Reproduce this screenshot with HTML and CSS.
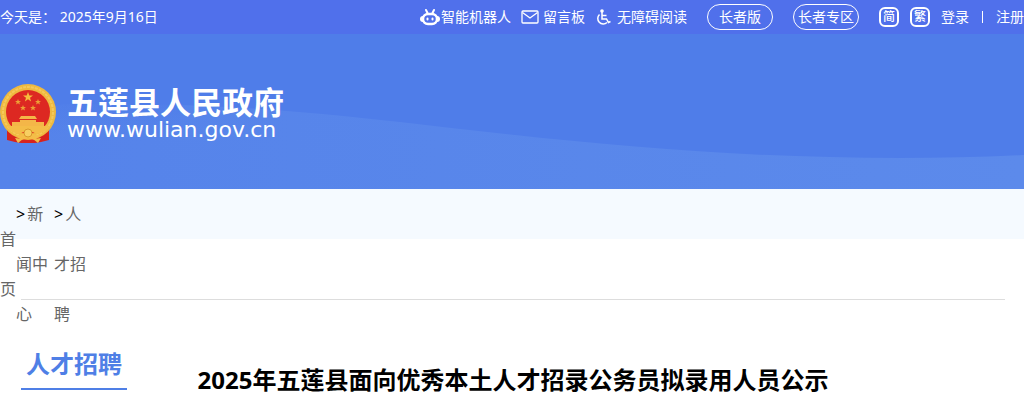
FILE: index.html
```html
<!DOCTYPE html>
<html lang="zh-CN">
<head>
    <meta charset="UTF-8">
    <meta name="viewport" content="width=device-width, initial-scale=1.0">
    <title>2025年五莲县面向优秀本土人才招录公务员拟录用人员公示</title>
    <link rel="stylesheet" href="styles.css">
</head>
<body>
    <header class="header">
        <div class="top-bar">
            <div class="today">今天是： 2025年9月16日</div>
            <nav class="top-links">
                <a class="robot" href="#">
                    <svg width="20" height="18" viewBox="0 0 20 18">
                        <path d="M6 2l1.500 3M14 2l-1.500 3" stroke="#fff" stroke-width="2" stroke-linecap="round"/>
                        <rect x="0" y="8" width="20" height="6" rx="3" fill="#fff"/>
                        <rect x="3" y="6" width="14" height="10" rx="5" fill="#5070eb" stroke="#fff" stroke-width="2.500"/>
                        <path d="M7.500 10.500v1M12.500 10.500v1" stroke="#fff" stroke-width="2" stroke-linecap="round"/>
                    </svg>智能机器人</a>
                <a class="message" href="#">
                    <svg width="18" height="14" viewBox="0 0 18 14" fill="none" stroke="#fff" stroke-width="1.300">
                        <rect x="1" y="1" width="16" height="12" rx="1"/>
                        <path d="M1.500 2.500L9 8l7.500-5.500"/>
                    </svg>留言板</a>
                <a class="barrier" href="#">
                    <svg width="16" height="17" viewBox="0 0 16 17" fill="none" stroke="#fff" stroke-width="1.500">
                        <circle cx="7" cy="2" r="1.800" fill="#fff" stroke="none"/>
                        <path d="M7 3v7h4.500l2 3.500 2-1M7 6.500h4.500M4.500 5.500a5.300 5.300 0 1 0 7.500 8"/>
                    </svg>无障碍阅读</a>
                <a class="pill" href="#">长者版</a>
                <a class="pill" href="#">长者专区</a>
                <a class="lang" href="#">简</a>
                <a class="lang" href="#">繁</a>
                <a class="login" href="#">登录</a>
                <span class="line"></span>
                <a href="#">注册</a>
            </nav>
        </div>
        <div class="banner">
            <svg class="wave" viewBox="0 0 1024 155" preserveAspectRatio="none">
                <defs>
                    <linearGradient id="wave-fill" x1="0" y1="0" x2="1" y2="0">
                        <stop offset="0" stop-color="#5583ea"/>
                        <stop offset="1" stop-color="#5c8aeb"/>
                    </linearGradient>
                    <linearGradient id="wave-fade" x1="0" y1="0" x2="0" y2="1">
                        <stop offset="0" stop-color="#4f7de9"/>
                        <stop offset="1" stop-color="#4f7de9" stop-opacity="0"/>
                    </linearGradient>
                </defs>
                <path d="M0 72C180 66 270 74 400 88C570 108 720 124 900 124Q965 124 1024 121V155H0Z" fill="url(#wave-fill)"/>
                <path d="M0 60H180V100H0Z" fill="url(#wave-fade)"/>
            </svg>
            <a class="logo" href="#">
                <svg class="emblem" width="56" height="60" viewBox="0 0 56 60">
                    <path d="M7 42v14l8 2 6 1h14l6-1 8-2V42z" fill="#d8231d"/>
                    <circle cx="28" cy="28" r="28" fill="#efb93f"/>
                    <circle cx="28" cy="28" r="25" fill="none" stroke="#f5c95a" stroke-width="2" stroke-dasharray="3 1"/>
                    <circle cx="28" cy="28" r="22" fill="#dd2822"/>
                    <path d="M28 8l1.300 3.500h3.700l-3 2.300 1.100 3.700-3.100-2.200-3.100 2.200 1.100-3.700-3-2.300h3.700z" fill="#f6bd3d"/>
                    <g fill="#eea036">
                        <path id="star" d="M18 15l.8 2h2.200l-1.700 1.300.6 2.200-1.900-1.300-1.900 1.300.6-2.200-1.700-1.300h2.200z"/>
                        <use href="#star" x="20"/>
                        <use href="#star" x="5" y="6"/>
                        <use href="#star" x="15" y="6"/>
                    </g>
                    <path d="M21 32h14l2 3H19zM20 36h16v2h8v4H12v-4h8z" fill="#f4b648"/>
                    <path d="M7 42h42l-3 5-9 3-9-4-9 4-9-3z" fill="#f4bd48"/>
                    <path d="M16 51q6 1 12-5 6 6 12 5l-5 5-7-2-7 2z" fill="#f4bd48"/>
                    <circle cx="28" cy="49" r="4" fill="#f7cf62" stroke="#d99a2b"/>
                    <path d="M15 54l8 1-5 4zM41 54l-8 1 5 4z" fill="#f2bd47"/>
                </svg>
                <span class="site">
                    <strong>五莲县人民政府</strong>
                    <span class="domain">www.wulian.gov.cn</span>
                </span>
            </a>
        </div>
    </header>

    <nav class="crumbs">
        <ul>
            <li class="home"><a href="#">首页</a></li>
            <li>&gt;<a href="#">新闻中心</a></li>
            <li>&gt;<a href="#">人才招聘</a></li>
        </ul>
    </nav>

    <main class="content">
        <h2>人才招聘</h2>
        <h1>2025年五莲县面向优秀本土人才招录公务员拟录用人员公示</h1>
    </main>
</body>
</html>
```
FILE: styles.css
```css
body {
    margin: 0;
    font-family: "Noto Sans", "Noto Sans CJK SC", sans-serif;
    font-size: 16px;
    color: #000;
    background: #fff;
}

a {
    color: inherit;
    text-decoration: none;
}

/* top bar */
.top-bar {
    display: flex;
    justify-content: space-between;
    align-items: center;
    height: 34px;
    background: #5070eb;
    color: #fff;
    font-size: 14px;
    line-height: 20px;
    white-space: nowrap;
}
.top-links {
    display: flex;
    align-items: center;
}
.top-links a {
    display: flex;
    align-items: center;
}
.robot {
    gap: 1px;
    margin-right: 10px;
}
.message {
    gap: 4px;
    margin-right: 10px;
}
.barrier {
    gap: 6px;
    margin-right: 20px;
}
.top-links .pill {
    box-sizing: border-box;
    justify-content: center;
    width: 66px;
    height: 26px;
    margin-right: 20px;
    border: 1px solid #fff;
    border-radius: 13px;
}
.top-links .lang {
    box-sizing: border-box;
    justify-content: center;
    width: 20px;
    height: 20px;
    margin-right: 11px;
    border: 2px solid #fff;
    border-radius: 6px;
    font-size: 12px;
    font-weight: 500;
    line-height: 16px;
}
.line {
    width: 1px;
    height: 12px;
    margin: 0 13px;
    background: #fff;
}

/* banner */
.banner {
    position: relative;
    display: flex;
    align-items: center;
    box-sizing: border-box;
    height: 155px;
    padding-top: 4px;
    background: #4f7de9;
}
.wave {
    position: absolute;
    top: 0;
    left: 0;
    width: 100%;
    height: 100%;
}
.logo {
    position: relative;
    display: flex;
    align-items: center;
    gap: 11px;
    color: #fff;
}
.site {
    display: flex;
    flex-direction: column;
}
.site strong {
    font-size: 31px;
    line-height: 32px;
}
.domain {
    font-family: "DejaVu Sans", Verdana, sans-serif;
    font-size: 22px;
    line-height: 24px;
}

/* breadcrumb */
.crumbs {
    height: 50px;
    background: #f5faff;
}
.crumbs ul {
    display: flex;
    align-items: center;
    margin: 0;
    padding: 0;
    list-style: none;
    line-height: 50px;
}
.crumbs li {
    width: 38px;
}
.crumbs .home {
    width: 16px;
}
.crumbs a {
    color: #666;
}
.crumbs li + li a {
    padding-left: 2px;
}

/* article */
.content {
    display: grid;
    grid-template-columns: 1fr auto 1fr;
    align-items: start;
    margin: 60px 19px 0 21px;
    padding-top: 40px;
    border-top: 1px solid #ddd;
}
.content h2 {
    justify-self: start;
    margin: 0;
    padding: 0 5px;
    border-bottom: 2px solid #4f7fe6;
    color: #4f7fe6;
    font-size: 24px;
    line-height: 48px;
}
.content h1 {
    margin: 16px 0 0;
    font-size: 24px;
    line-height: 48px;
}
```
